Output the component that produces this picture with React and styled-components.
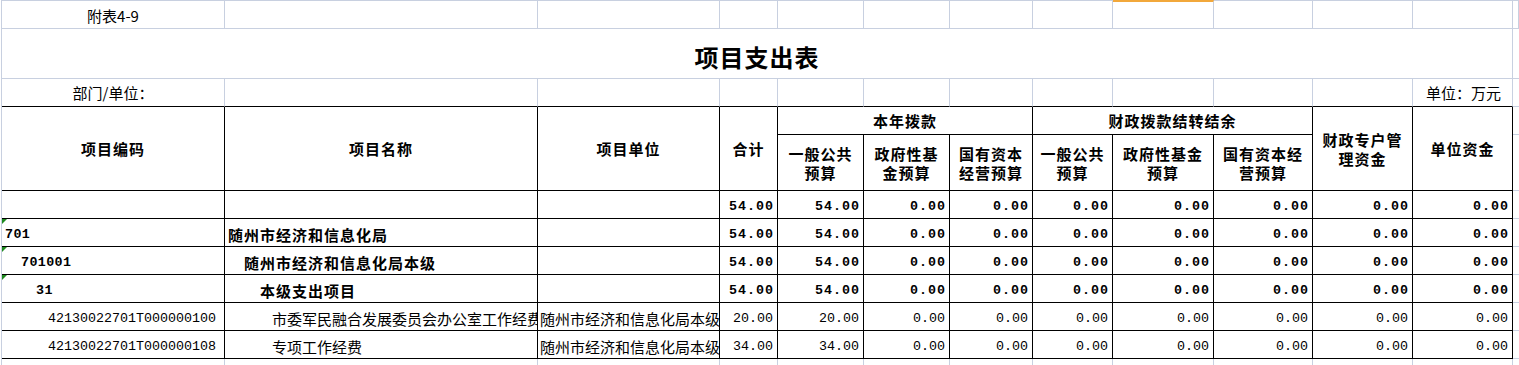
import React from "react";
import styled, { createGlobalStyle, css } from "styled-components";

const GRID = "#c8d0e0";
const INK = "#000";
const ORANGE = "#f2a83b";
const CJK = `"Noto Sans CJK SC", "Noto Sans", sans-serif`;
const MONO = `"Liberation Mono", "DejaVu Sans Mono", monospace`;

const COLS = [223, 313, 182, 58, 86, 86, 83, 80, 101, 99, 100, 100];

const GlobalStyle = createGlobalStyle`
  html, body { margin: 0; padding: 0; background: #fff; overflow: hidden; }
  body { font-family: ${CJK}; color: ${INK}; }
`;

const Sheet = styled.div`
  display: grid;
  grid-template-columns: ${COLS.map((w) => `${w}px`).join(" ")} 6px;
  grid-template-rows: 29px 50px 28px 28px 56px repeat(6, 28px) 7px;
  width: max-content;
  margin-left: 1px;
  border-left: 1px solid ${GRID};
`;

const Cell = styled.div`
  box-sizing: border-box;
  min-width: 0;
  display: flex;
  align-items: center;
  overflow: hidden;
  white-space: nowrap;
  font-size: 15px;
  line-height: 19px;
  border-right: 1px solid ${GRID};
  border-bottom: 1px solid ${GRID};
  ${(p) => p.$cols && css`grid-column: span ${p.$cols};`}
  ${(p) => p.$rows && css`grid-row: span ${p.$rows};`}
`;

const TopCell = styled(Cell)`
  border-top: ${(p) => (p.$active ? `2px solid ${ORANGE}` : `1px solid ${GRID}`)};
  justify-content: center;
  padding-top: 1px;
`;

const TitleCell = styled(Cell)`
  grid-column: span 12;
  justify-content: center;
  padding-top: 5px;
  font-size: 24px;
  font-weight: 700;
  letter-spacing: 1px;
`;

const InfoCell = styled(Cell)`
  border-bottom: 1px solid ${INK};
  justify-content: ${(p) => (p.$end ? "flex-end" : "center")};
  padding-right: ${(p) => (p.$end ? "11px" : "0")};
`;

const HeadCell = styled(Cell)`
  border-right: 1px solid ${INK};
  border-bottom: 1px solid ${INK};
  justify-content: center;
  text-align: center;
  white-space: normal;
  font-weight: 700;
  letter-spacing: 1px;
`;

const RowCell = styled(Cell)`
  position: relative;
  padding-top: 4px;
  border-right: 1px solid ${INK};
  border-bottom: 1px solid ${INK};
  font-weight: ${(p) => (p.$bold ? 700 : 400)};
`;

const CodeCell = styled(RowCell)`
  padding-left: ${(p) => p.$indent}px;
  font-family: ${MONO};
  font-size: 13.34px;
  letter-spacing: ${(p) => (p.$bold ? "0.4px" : "0")};
`;

const NameCell = styled(RowCell)`
  padding-left: ${(p) => p.$indent}px;
  letter-spacing: ${(p) => (p.$bold ? "1px" : "0")};
`;

const UnitCell = styled(RowCell)`
  padding-left: 2px;
`;

const NumCell = styled(RowCell)`
  justify-content: flex-end;
  padding-right: ${(p) => (p.$bold ? "3px" : "4px")};
  font-family: ${MONO};
  font-size: 13.34px;
  letter-spacing: ${(p) => (p.$bold ? "1px" : "0")};
`;

const FillCell = styled(Cell)`
  border-right: none;
`;

const TailCell = styled(Cell)`
  border-bottom: none;
`;

const TailFill = styled(TailCell)`
  border-right: none;
`;

const TextFlag = styled.span`
  position: absolute;
  top: 0;
  left: 0;
  width: 0;
  height: 0;
  border-top: 5px solid #1f8a1f;
  border-right: 5px solid transparent;
`;

const ZERO = "0.00";

const ROWS = [
  { code: "", name: "", unit: "", bold: true, nums: ["54.00", "54.00", ZERO, ZERO, ZERO, ZERO, ZERO, ZERO, ZERO] },
  { code: "701", codeIndent: 3, name: "随州市经济和信息化局", nameIndent: 3, unit: "", bold: true, flag: true, nums: ["54.00", "54.00", ZERO, ZERO, ZERO, ZERO, ZERO, ZERO, ZERO] },
  { code: "701001", codeIndent: 19, name: "随州市经济和信息化局本级", nameIndent: 19, unit: "", bold: true, flag: true, nums: ["54.00", "54.00", ZERO, ZERO, ZERO, ZERO, ZERO, ZERO, ZERO] },
  { code: "31", codeIndent: 34, name: "本级支出项目", nameIndent: 35, unit: "", bold: true, flag: true, nums: ["54.00", "54.00", ZERO, ZERO, ZERO, ZERO, ZERO, ZERO, ZERO] },
  { code: "42130022701T000000100", codeIndent: 46, name: "市委军民融合发展委员会办公室工作经费", nameIndent: 47, unit: "随州市经济和信息化局本级", bold: false, nums: ["20.00", "20.00", ZERO, ZERO, ZERO, ZERO, ZERO, ZERO, ZERO] },
  { code: "42130022701T000000108", codeIndent: 46, name: "专项工作经费", nameIndent: 47, unit: "随州市经济和信息化局本级", bold: false, nums: ["34.00", "34.00", ZERO, ZERO, ZERO, ZERO, ZERO, ZERO, ZERO] },
];

export default function App() {
  return (
    <>
      <GlobalStyle />
      <Sheet>
        {/* row: 附表 */}
        <TopCell>附表4-9</TopCell>
        {COLS.slice(1).map((_, i) => (
          <TopCell key={`t${i}`} $active={i === 7} />
        ))}
        <TopCell />

        {/* row: title */}
        <TitleCell>项目支出表</TitleCell>
        <FillCell />

        {/* row: 部门/单位 */}
        <InfoCell>部门/单位：</InfoCell>
        {COLS.slice(1, 11).map((_, i) => (
          <InfoCell key={`i${i}`} />
        ))}
        <InfoCell $end>单位：万元</InfoCell>
        <FillCell />

        {/* header */}
        <HeadCell $rows={2}>项目编码</HeadCell>
        <HeadCell $rows={2}>项目名称</HeadCell>
        <HeadCell $rows={2}>项目单位</HeadCell>
        <HeadCell $rows={2}>合计</HeadCell>
        <HeadCell $cols={3}>本年拨款</HeadCell>
        <HeadCell $cols={3}>财政拨款结转结余</HeadCell>
        <HeadCell $rows={2}>
          财政专户管
          <br />
          理资金
        </HeadCell>
        <HeadCell $rows={2}>单位资金</HeadCell>
        <FillCell />
        <HeadCell>
          一般公共
          <br />
          预算
        </HeadCell>
        <HeadCell>
          政府性基
          <br />
          金预算
        </HeadCell>
        <HeadCell>
          国有资本
          <br />
          经营预算
        </HeadCell>
        <HeadCell>
          一般公共
          <br />
          预算
        </HeadCell>
        <HeadCell>
          政府性基金
          <br />
          预算
        </HeadCell>
        <HeadCell>
          国有资本经
          <br />
          营预算
        </HeadCell>
        <FillCell />

        {/* data rows */}
        {ROWS.map((r, ri) => (
          <React.Fragment key={`r${ri}`}>
            <CodeCell $bold={r.bold} $indent={r.codeIndent || 0}>
              {r.flag && <TextFlag />}
              {r.code}
            </CodeCell>
            <NameCell $bold={r.bold} $indent={r.nameIndent || 0}>
              {r.name}
            </NameCell>
            <UnitCell $bold={r.bold}>{r.unit}</UnitCell>
            {r.nums.map((n, ni) => (
              <NumCell key={`n${ni}`} $bold={r.bold}>
                {n}
              </NumCell>
            ))}
            <FillCell />
          </React.Fragment>
        ))}

        {/* top of the empty spreadsheet row below the table */}
        {COLS.map((_, i) => (
          <TailCell key={`e${i}`} />
        ))}
        <TailFill />
      </Sheet>
    </>
  );
}
